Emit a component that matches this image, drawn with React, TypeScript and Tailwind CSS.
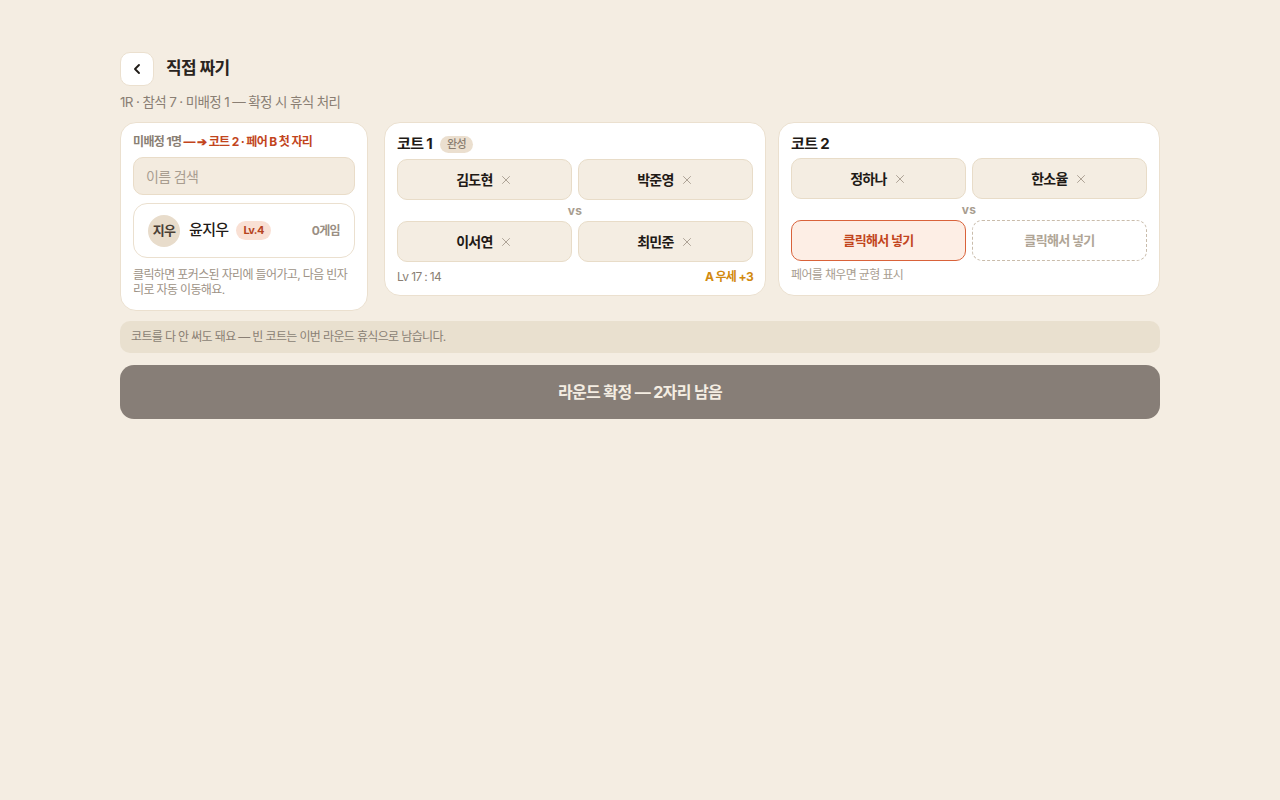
import { ChevronLeft, X } from 'lucide-react';

const font = { fontFamily: 'Inter, "Noto Sans CJK KR", sans-serif' };

function Slot({ name }: { name: string }) {
  return (
    <div className="flex h-[41px] items-center justify-center gap-1.5 rounded-[10px] border border-[#e8dcc8] bg-[#f4ede2]">
      <span className="text-[14px] font-bold text-[#1f1a16]">{name}</span>
      <X size={14} strokeWidth={1.6} className="text-[#a89d90]" />
    </div>
  );
}

function EmptySlot({ focused }: { focused?: boolean }) {
  return focused ? (
    <div className="flex h-[41px] items-center justify-center rounded-[10px] border-[1.5px] border-[#d9623a] bg-[#fdeee5] text-[13px] font-bold text-[#c2451d]">
      클릭해서 넣기
    </div>
  ) : (
    <div className="flex h-[41px] items-center justify-center rounded-[10px] border border-dashed border-[#c9bcab] bg-white text-[13px] font-bold text-[#b0a596]">
      클릭해서 넣기
    </div>
  );
}

function Vs() {
  return <div className="py-[3px] text-center text-[12px] font-bold leading-[15px] tracking-wide text-[#a89d90]">vs</div>;
}

export default function App() {
  return (
    <div className="min-h-screen bg-[#f4ede2] tracking-[-0.04em] text-[#1f1a16]" style={font}>
      <div className="mx-auto w-[1040px] pt-[52px]">
        <div className="flex items-center gap-3">
          <button className="flex h-[34px] w-[34px] items-center justify-center rounded-[10px] border border-[#ebe0cf] bg-white">
            <ChevronLeft size={16} strokeWidth={2.8} className="text-[#1f1a16]" />
          </button>
          <h1 className="text-[17px] font-bold text-[#2a2420]">직접 짜기</h1>
        </div>
        <p className="mt-[6px] text-[13.5px] leading-[20px] text-[#8a7f74]">1R · 참석 7 · 미배정 1 — 확정 시 휴식 처리</p>

        <div className="mt-[10px] flex items-start gap-4">
          <aside className="w-[248px] shrink-0 rounded-[16px] border border-[#ebe0cf] bg-white px-3 pb-[13px] pt-[10px]">
            <div className="text-[12px] font-bold leading-[18px] text-[#8a7f74]">
              미배정 1명 <span className="text-[#c2451d]">— ➔ 코트 2 · 페어 B 첫 자리</span>
            </div>
            <div className="mt-[6px] flex h-[38px] items-center rounded-[10px] border border-[#e9dcc8] bg-[#f3ebdf] px-3 text-[14px] text-[#a89d90]">
              이름 검색
            </div>
            <div className="mt-2 flex h-[55px] items-center rounded-[14px] border border-[#ebe0cf] bg-white px-[14px]">
              <div className="flex h-[32px] w-[32px] items-center justify-center rounded-full bg-[#e8dccb] text-[13px] font-bold text-[#4a3f35]">
                지우
              </div>
              <span className="ml-[9px] text-[15px] font-medium text-[#1f1a16]">윤지우</span>
              <span className="ml-2 rounded-full bg-[#f9e0d4] px-[7px] py-[1px] text-[11px] font-bold text-[#b5431e]">Lv.4</span>
              <span className="ml-auto text-[12px] font-bold text-[#9a8f84]">0게임</span>
            </div>
            <p className="mt-[9px] text-[12px] leading-[15px] text-[#9d9286]">
              클릭하면 포커스된 자리에 들어가고, 다음 빈자리로 자동 이동해요.
            </p>
          </aside>

          <div className="grid flex-1 grid-cols-2 gap-3">
            <section className="rounded-[16px] border border-[#ebe0cf] bg-white px-3 pb-[10px] pt-3">
              <div className="flex h-[18px] items-center gap-2">
                <span className="text-[15px] font-bold">코트 1</span>
                <span className="rounded-full bg-[#ebdfcf] px-[7px] text-[11px] font-medium leading-[17px] text-[#8a7d70]">완성</span>
              </div>
              <div className="mt-[6px] grid grid-cols-2 gap-[6px]">
                <Slot name="김도현" />
                <Slot name="박준영" />
              </div>
              <Vs />
              <div className="grid grid-cols-2 gap-[6px]">
                <Slot name="이서연" />
                <Slot name="최민준" />
              </div>
              <div className="mt-[7px] flex items-center justify-between text-[12px] leading-[16px]">
                <span className="text-[#8a7f74]">Lv 17 : 14</span>
                <span className="font-bold text-[#d28a0f]">A 우세 +3</span>
              </div>
            </section>

            <section className="rounded-[16px] border border-[#ebe0cf] bg-white px-3 pb-[10px] pt-3">
              <div className="flex h-[18px] items-center">
                <span className="text-[15px] font-bold">코트 2</span>
              </div>
              <div className="mt-[5px] grid grid-cols-2 gap-[6px]">
                <Slot name="정하나" />
                <Slot name="한소율" />
              </div>
              <Vs />
              <div className="grid grid-cols-2 gap-[6px]">
                <EmptySlot focused />
                <EmptySlot />
              </div>
              <div className="mt-[6px] text-[12px] leading-[16px] text-[#a89d90]">페어를 채우면 균형 표시</div>
            </section>
          </div>
        </div>

        <div className="mt-[10px] flex h-[32px] items-center rounded-[10px] bg-[#e9e0cf] px-[11px] text-[12px] text-[#8a7f74]">
          코트를 다 안 써도 돼요 — 빈 코트는 이번 라운드 휴식으로 남습니다.
        </div>
        <button className="mt-3 flex h-[54px] w-full items-center justify-center rounded-[14px] bg-[#877e77] text-[16px] font-bold text-[#f4ede2]">
          라운드 확정 — 2자리 남음
        </button>
      </div>
    </div>
  );
}
